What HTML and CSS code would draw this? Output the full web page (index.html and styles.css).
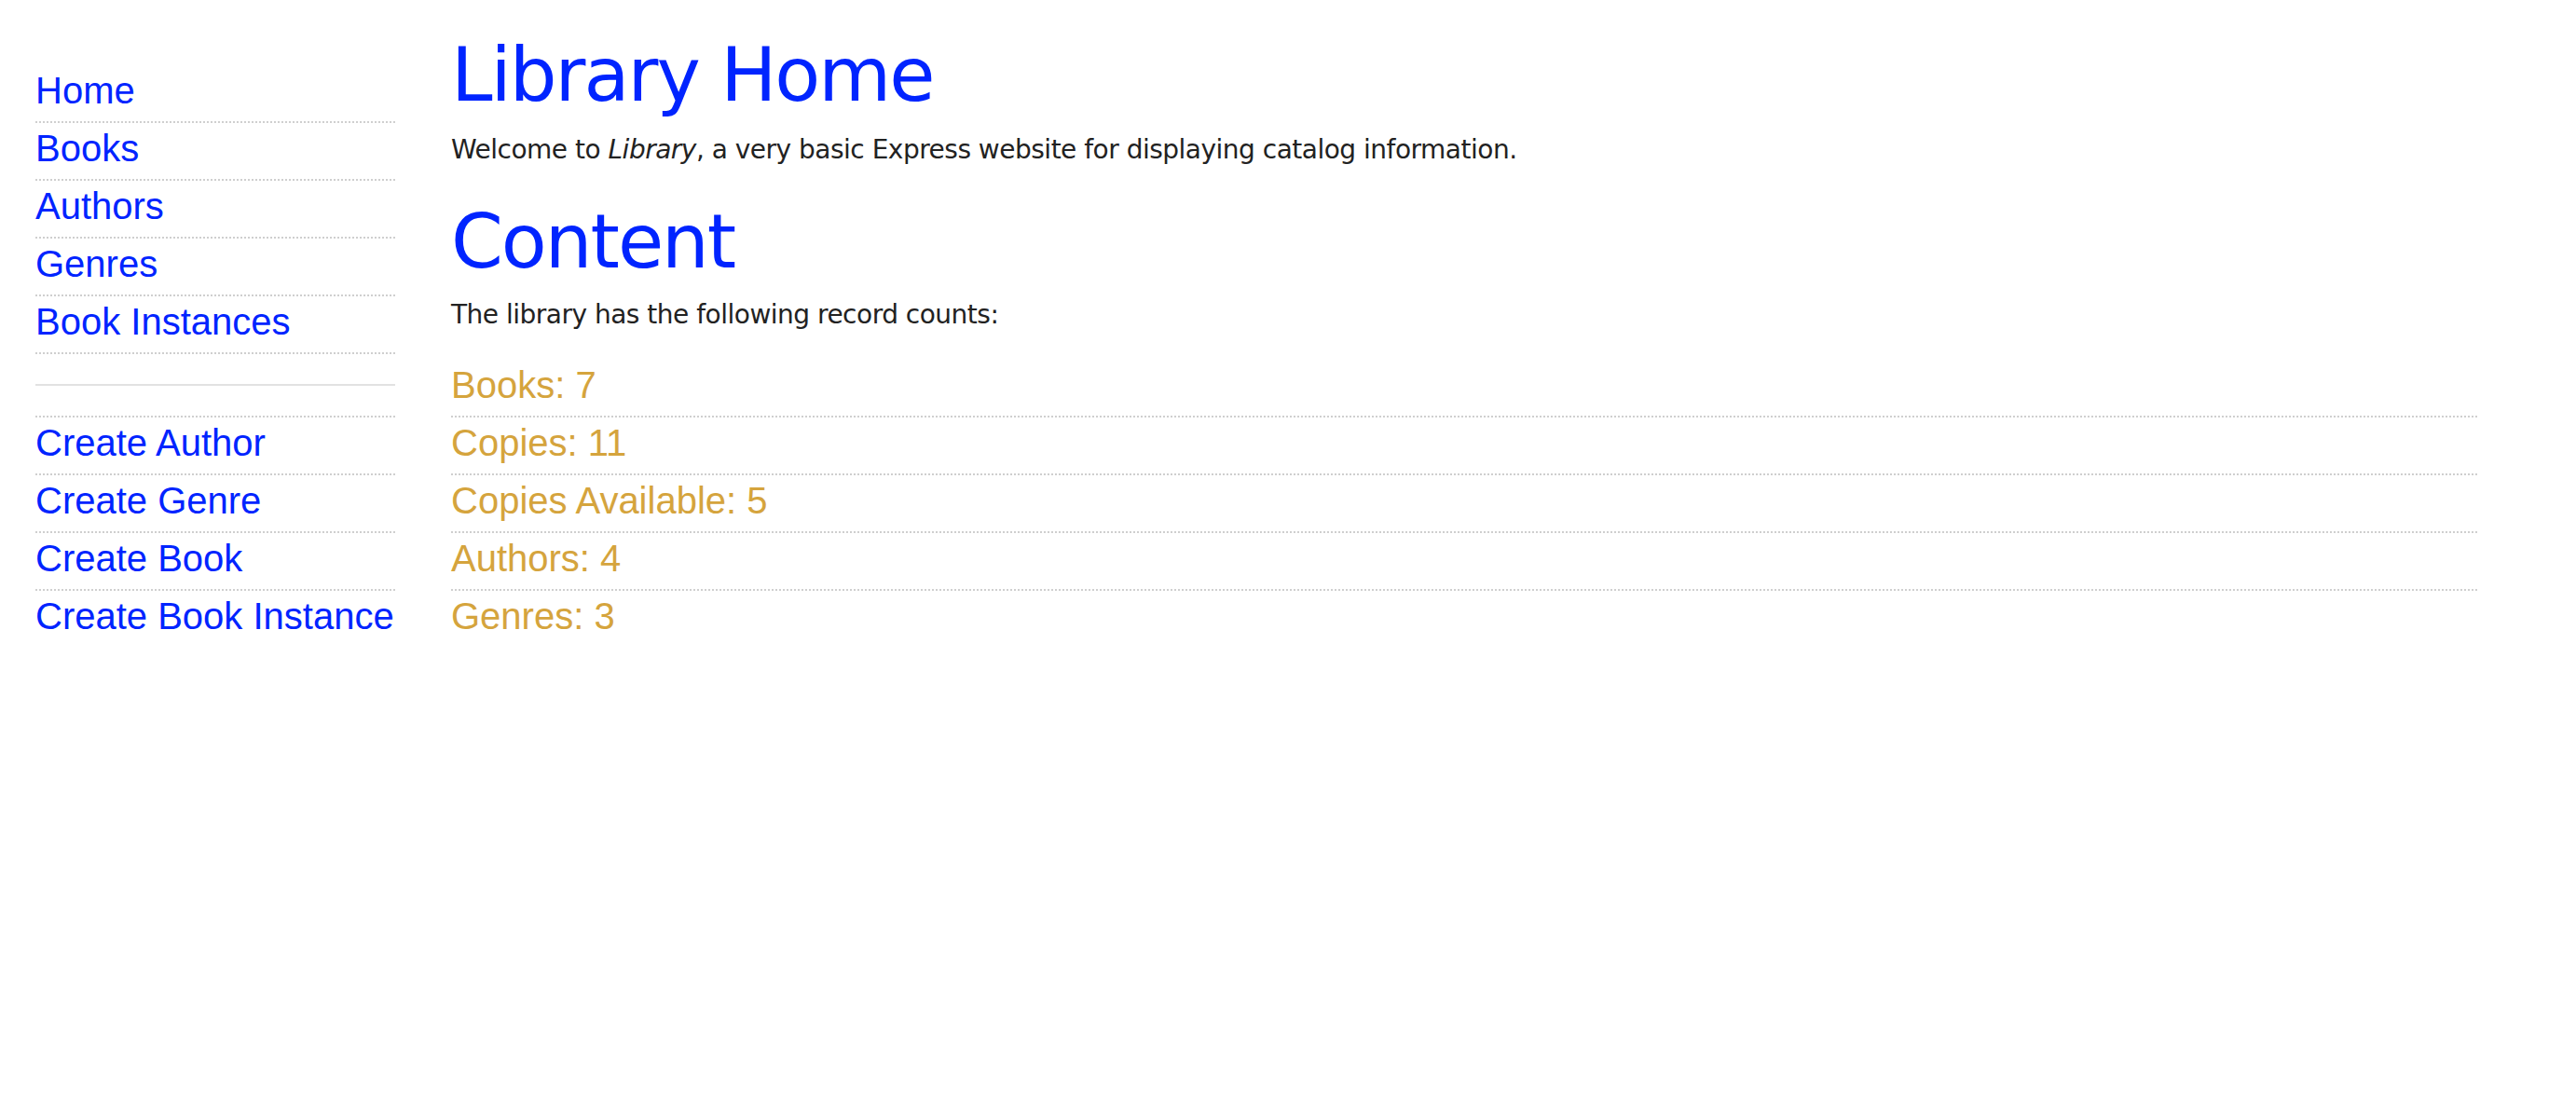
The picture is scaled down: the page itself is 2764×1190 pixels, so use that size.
FILE: index.html
```html
<!DOCTYPE html>
<html lang="en">
<head>
<meta charset="utf-8">
<title>Local Library</title>
<link rel="stylesheet" href="styles.css">
</head>
<body>
<div class="page">
  <nav class="sidebar">
    <ul class="nav-list">
      <li><a href="#">Home</a></li>
      <li><a href="#">Books</a></li>
      <li><a href="#">Authors</a></li>
      <li><a href="#">Genres</a></li>
      <li><a href="#">Book Instances</a></li>
      <li class="sep"><hr class="rule"></li>
      <li><a href="#">Create Author</a></li>
      <li><a href="#">Create Genre</a></li>
      <li><a href="#">Create Book</a></li>
      <li><a href="#">Create Book Instance</a></li>
    </ul>
  </nav>
  <main class="main">
    <h1 class="title">Library Home</h1>
    <p class="intro">Welcome to <em>Library</em>, a very basic Express website for displaying catalog information.</p>
    <h1 class="title title-2">Content</h1>
    <p class="lead">The library has the following record counts:</p>
    <ul class="counts">
      <li><strong>Books:</strong> 7</li>
      <li><strong>Copies:</strong> 11</li>
      <li><strong>Copies Available:</strong> 5</li>
      <li><strong>Authors:</strong> 4</li>
      <li><strong>Genres:</strong> 3</li>
    </ul>
  </main>
</div>
</body>
</html>
```

FILE: styles.css
```css
html, body {
  margin: 0;
  padding: 0;
  background: #fff;
}

body {
  font-family: "DejaVu Sans", Verdana, sans-serif;
  color: #222;
}

.page {
  display: flex;
  align-items: flex-start;
  padding-left: 38px;
  gap: 60px;
}

.sidebar {
  width: 386px;
  flex: 0 0 386px;
  padding-top: 70px;
}

.nav-list,
.counts {
  list-style: none;
  margin: 0;
  padding: 0;
  font-family: "Liberation Sans", Arial, Helvetica, sans-serif;
  font-size: 40px;
}

.nav-list li,
.counts li {
  line-height: 54px;
  padding-bottom: 6px;
  white-space: nowrap;
}

.nav-list li + li,
.counts li + li {
  border-top: 2px dotted #cfcfcf;
}

.nav-list a {
  color: #0024ff;
  text-decoration: none;
}

.nav-list li.sep {
  line-height: normal;
  padding: 32px 0;
}

.rule {
  margin: 0;
  border: 0;
  height: 2px;
  background: #e2e2e2;
}

.main {
  width: 2174px;
  flex: 0 0 2174px;
  padding-top: 33px;
}

.title {
  margin: 0;
  font-size: 80px;
  line-height: 96px;
  font-weight: normal;
  letter-spacing: -2px;
  color: #0024ff;
}

.title-2 {
  margin-top: 31px;
}

.intro,
.lead {
  margin: 0;
  font-size: 28px;
  line-height: 40px;
  letter-spacing: -0.5px;
  color: #222;
}

.intro {
  margin-top: 12px;
}

.lead {
  margin-top: 10px;
}

.counts {
  margin-top: 28px;
  color: #d5a43d;
}

.counts strong {
  font-weight: normal;
}
```
